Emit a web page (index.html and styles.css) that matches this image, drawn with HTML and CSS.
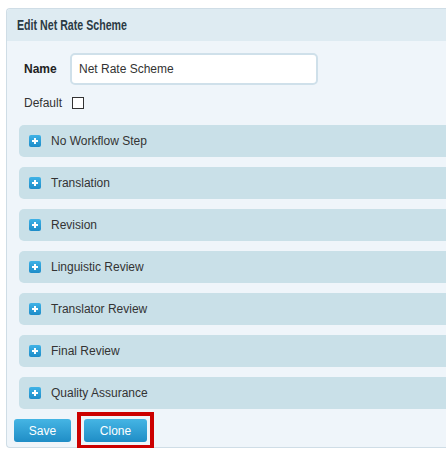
FILE: index.html
```html
<!DOCTYPE html>
<html>
<head>
<meta charset="utf-8">
<link rel="stylesheet" href="styles.css">
</head>
<body>
<div class="panel">
  <div class="panel-header"><span class="header-title">Edit Net Rate Scheme</span></div>
  <div class="panel-body">
    <div class="name-row">
      <span class="name-label">Name</span>
      <div class="text-input">Net Rate Scheme</div>
    </div>
    <div class="default-row">
      <span class="default-label">Default</span>
      <span class="checkbox"></span>
    </div>
    <div class="steps">
      <div class="step"><span class="plus"></span><span class="step-label">No Workflow Step</span></div>
      <div class="step"><span class="plus"></span><span class="step-label">Translation</span></div>
      <div class="step"><span class="plus"></span><span class="step-label">Revision</span></div>
      <div class="step"><span class="plus"></span><span class="step-label">Linguistic Review</span></div>
      <div class="step"><span class="plus"></span><span class="step-label">Translator Review</span></div>
      <div class="step"><span class="plus"></span><span class="step-label">Final Review</span></div>
      <div class="step"><span class="plus"></span><span class="step-label">Quality Assurance</span></div>
    </div>
    <div class="actions">
      <button class="btn btn-save">Save</button>
      <button class="btn btn-clone">Clone</button>
    </div>
  </div>
</div>
</body>
</html>
```
FILE: styles.css
```css
html, body {
  margin: 0;
  padding: 0;
  background: #ffffff;
  overflow: hidden;
}
body {
  font-family: "Liberation Sans", Arial, sans-serif;
  font-size: 12px;
  color: #333333;
  padding-top: 8px;
  padding-left: 6px;
}
.panel {
  border: 1px solid #cfdde6;
  border-right: none;
  border-radius: 4px 0 0 4px;
  background: #eff5fa;
}
.panel-header {
  height: 32px;
  box-sizing: border-box;
  background: #deebf2;
  border-radius: 4px 0 0 0;
  padding-left: 10px;
  line-height: 33px;
  font-weight: bold;
  font-size: 14px;
  color: #2b3a44;
}
.header-title {
  display: inline-block;
  transform: scaleX(0.76);
  transform-origin: left center;
  white-space: nowrap;
}
.panel-body {
  padding: 12px 0 5px 0;
}
.name-row {
  display: flex;
  align-items: center;
  margin-left: 17px;
}
.name-label {
  font-weight: bold;
  width: 46px;
  color: #222;
}
.text-input {
  width: 248px;
  height: 32px;
  box-sizing: border-box;
  border: 2px solid #cfe0ea;
  border-radius: 5px;
  background: #ffffff;
  padding-left: 7px;
  line-height: 28px;
  color: #333;
}
.default-row {
  display: flex;
  align-items: center;
  margin-left: 17px;
  margin-top: 12px;
  height: 12px;
}
.default-label {
  width: 48px;
}
.checkbox {
  width: 12px;
  height: 12px;
  box-sizing: border-box;
  border: 1px solid #333333;
  background: #ffffff;
}
.steps {
  margin-top: 16px;
  display: flex;
  flex-direction: column;
  gap: 10px;
  margin-left: 12px;
}
.step {
  height: 32px;
  background: #c9e0e8;
  border-radius: 5px 0 0 5px;
  display: flex;
  align-items: center;
  padding-left: 10px;
}
.plus {
  position: relative;
  width: 12px;
  height: 12px;
  border-radius: 2px;
  background: linear-gradient(#3fb2e6, #1d8cc8);
  margin-right: 10px;
  flex: none;
}
.plus::before, .plus::after {
  content: "";
  position: absolute;
  background: #ffffff;
}
.plus::before {
  left: 3px;
  top: 5px;
  width: 6px;
  height: 2px;
}
.plus::after {
  left: 5px;
  top: 3px;
  width: 2px;
  height: 6px;
}
.step-label {
  color: #333333;
}
.actions {
  display: flex;
  gap: 13px;
  margin-top: 10px;
  margin-left: 7px;
}
.btn {
  height: 23px;
  border: none;
  border-radius: 3px;
  background: linear-gradient(#45b5e4, #1f8dc6);
  color: #ffffff;
  font-family: "Liberation Sans", Arial, sans-serif;
  font-size: 12px;
  padding: 0;
}
.btn-save {
  width: 57px;
}
.btn-clone {
  position: relative;
  width: 63px;
}
.btn-clone::after {
  content: "";
  position: absolute;
  left: -7px;
  top: -7px;
  right: -7px;
  bottom: -7px;
  border: 4px solid #cc0000;
  pointer-events: none;
}
```
